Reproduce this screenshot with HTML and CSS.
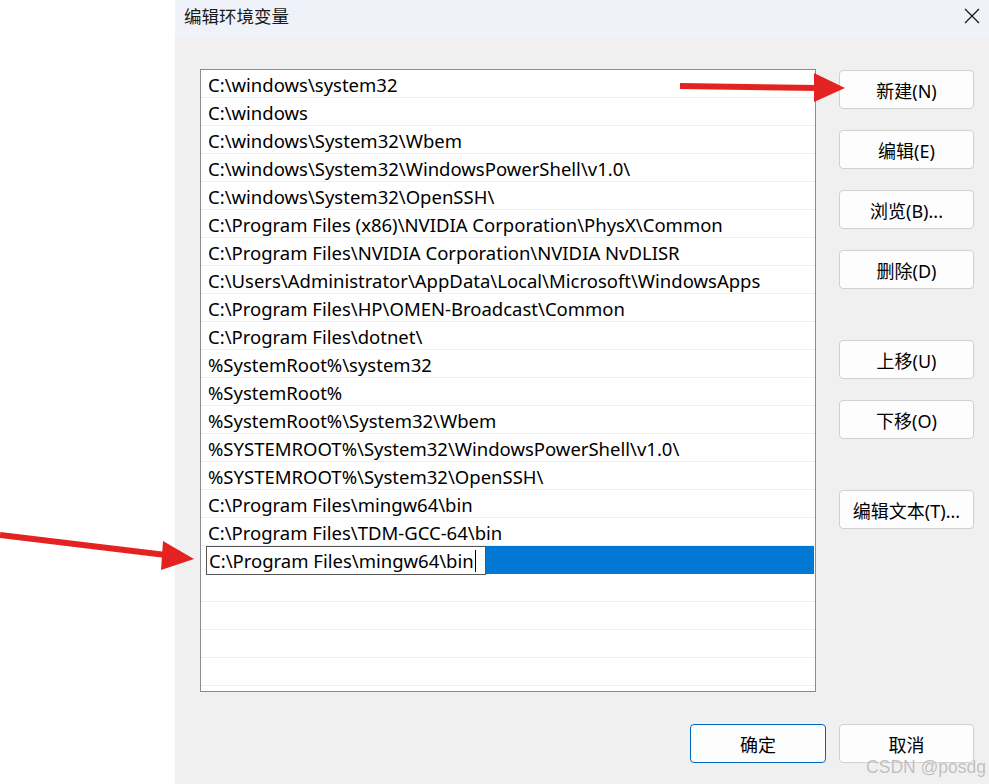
FILE: index.html
```html
<!DOCTYPE html>
<html lang="zh-CN">
<head>
<meta charset="utf-8">
<title>编辑环境变量</title>
<link rel="stylesheet" href="styles.css">
</head>
<body>
<div class="page">
  <div class="backdrop"></div>
  <div class="dialog">
    <div class="titlebar">
      <span class="title">编辑环境变量</span>
      <svg class="close" width="16" height="16" viewBox="0 0 16 16"><path d="M1 1 L15 15 M15 1 L1 15" stroke="#1a1a1a" stroke-width="1.3" fill="none"/></svg>
    </div>
    <div class="content">
      <div class="main">
        <div class="list">
          <div class="row">C:\windows\system32</div>
          <div class="row">C:\windows</div>
          <div class="row">C:\windows\System32\Wbem</div>
          <div class="row">C:\windows\System32\WindowsPowerShell\v1.0\</div>
          <div class="row">C:\windows\System32\OpenSSH\</div>
          <div class="row">C:\Program Files (x86)\NVIDIA Corporation\PhysX\Common</div>
          <div class="row">C:\Program Files\NVIDIA Corporation\NVIDIA NvDLISR</div>
          <div class="row">C:\Users\Administrator\AppData\Local\Microsoft\WindowsApps</div>
          <div class="row">C:\Program Files\HP\OMEN-Broadcast\Common</div>
          <div class="row">C:\Program Files\dotnet\</div>
          <div class="row">%SystemRoot%\system32</div>
          <div class="row">%SystemRoot%</div>
          <div class="row">%SystemRoot%\System32\Wbem</div>
          <div class="row">%SYSTEMROOT%\System32\WindowsPowerShell\v1.0\</div>
          <div class="row">%SYSTEMROOT%\System32\OpenSSH\</div>
          <div class="row">C:\Program Files\mingw64\bin</div>
          <div class="row">C:\Program Files\TDM-GCC-64\bin</div>
          <div class="row editing">
            <div class="editbox"><span>C:\Program Files\mingw64\bin</span><span class="caret"></span></div>
            <div class="sel"></div>
          </div>
          <div class="row"></div>
          <div class="row"></div>
          <div class="row"></div>
          <div class="row"></div>
        </div>
        <div class="side">
          <button class="btn">新建(N)</button>
          <button class="btn">编辑(E)</button>
          <button class="btn">浏览(B)...</button>
          <button class="btn">删除(D)</button>
          <button class="btn group">上移(U)</button>
          <button class="btn">下移(O)</button>
          <button class="btn group">编辑文本(T)...</button>
        </div>
      </div>
      <div class="footer">
        <button class="btn primary">确定</button>
        <button class="btn">取消</button>
      </div>
    </div>
  </div>
  <svg class="arrows" width="989" height="784" viewBox="0 0 989 784">
    <line x1="680" y1="86" x2="818" y2="88" stroke="#e52222" stroke-width="6"/>
    <polygon points="814,73 845,88 814,102" fill="#e52222"/>
    <line x1="0" y1="535" x2="166" y2="555" stroke="#e52222" stroke-width="6"/>
    <polygon points="163,541 194,559 161,570" fill="#e52222"/>
  </svg>
  <div class="watermark">CSDN @posdg</div>
</div>
</body>
</html>
```

FILE: styles.css
```css
* { box-sizing: border-box; }
html, body { margin: 0; padding: 0; }
body {
  width: 989px;
  height: 784px;
  overflow: hidden;
  background: #ffffff;
  font-family: "Noto Sans", "Noto Sans CJK SC", sans-serif;
  color: #000;
}
.page {
  position: relative;
  display: flex;
  width: 989px;
  height: 784px;
}
.backdrop {
  width: 175px;
  flex: none;
  background: #ffffff;
}
.dialog {
  flex: 1;
  display: flex;
  flex-direction: column;
  background: #f0f0f0;
}
.titlebar {
  height: 38px;
  flex: none;
  background: #eff2f8;
  display: flex;
  align-items: flex-start;
  justify-content: space-between;
  padding: 4px 9px 0 9px;
}
.title {
  font-family: "Noto Sans CJK SC", sans-serif;
  font-size: 17.5px;
  line-height: 24px;
  color: #1a1a1a;
}
.close { margin-top: 4px; }
.content {
  flex: 1;
  display: flex;
  flex-direction: column;
  padding: 31px 15px 0 25px;
}
.main {
  display: flex;
  gap: 23px;
}
.list {
  width: 616px;
  height: 623px;
  border: 1px solid #8b8b96;
  background: #ffffff;
  overflow: hidden;
}
.row {
  height: 28px;
  border-bottom: 1px solid #efefef;
  padding: 1px 0 0 7px;
  font-size: 18.5px;
  line-height: 27px;
  white-space: nowrap;
}
.row.editing {
  display: flex;
  padding: 0 0 0 5px;
  border-bottom: none;
}
.editbox {
  width: 280px;
  height: 29px;
  border: 1px solid #555555;
  background: #ffffff;
  padding: 1px 0 0 2px;
  line-height: 26px;
  display: flex;
  align-items: center;
}
.caret {
  display: inline-block;
  width: 1px;
  height: 22px;
  background: #000;
  margin-left: 1px;
}
.sel {
  flex: 1;
  height: 28px;
  background: #0078d4;
  margin-right: 1px;
}
.side {
  width: 135px;
  display: flex;
  flex-direction: column;
  gap: 21px;
  padding-top: 1px;
}
.btn {
  width: 135px;
  height: 39px;
  border: 1px solid #d0d0d0;
  border-radius: 4px;
  background: #fdfdfd;
  font-family: "Noto Sans", "Noto Sans CJK SC", sans-serif;
  font-size: 18px;
  color: #000;
  padding: 0;
}
.btn.group { margin-top: 30px; }
.btn.primary {
  width: 136px;
  border: 1px solid #0067c0;
}
.footer {
  display: flex;
  justify-content: flex-end;
  gap: 13px;
  margin-top: 32px;
}
.arrows {
  position: absolute;
  left: 0;
  top: 0;
  pointer-events: none;
}
.watermark {
  position: absolute;
  right: 3px;
  bottom: 6px;
  font-family: "Liberation Sans", sans-serif;
  font-size: 17.5px;
  color: rgba(150, 150, 150, 0.6);
  text-shadow: 0 0 1px rgba(255,255,255,0.8);
}
```
